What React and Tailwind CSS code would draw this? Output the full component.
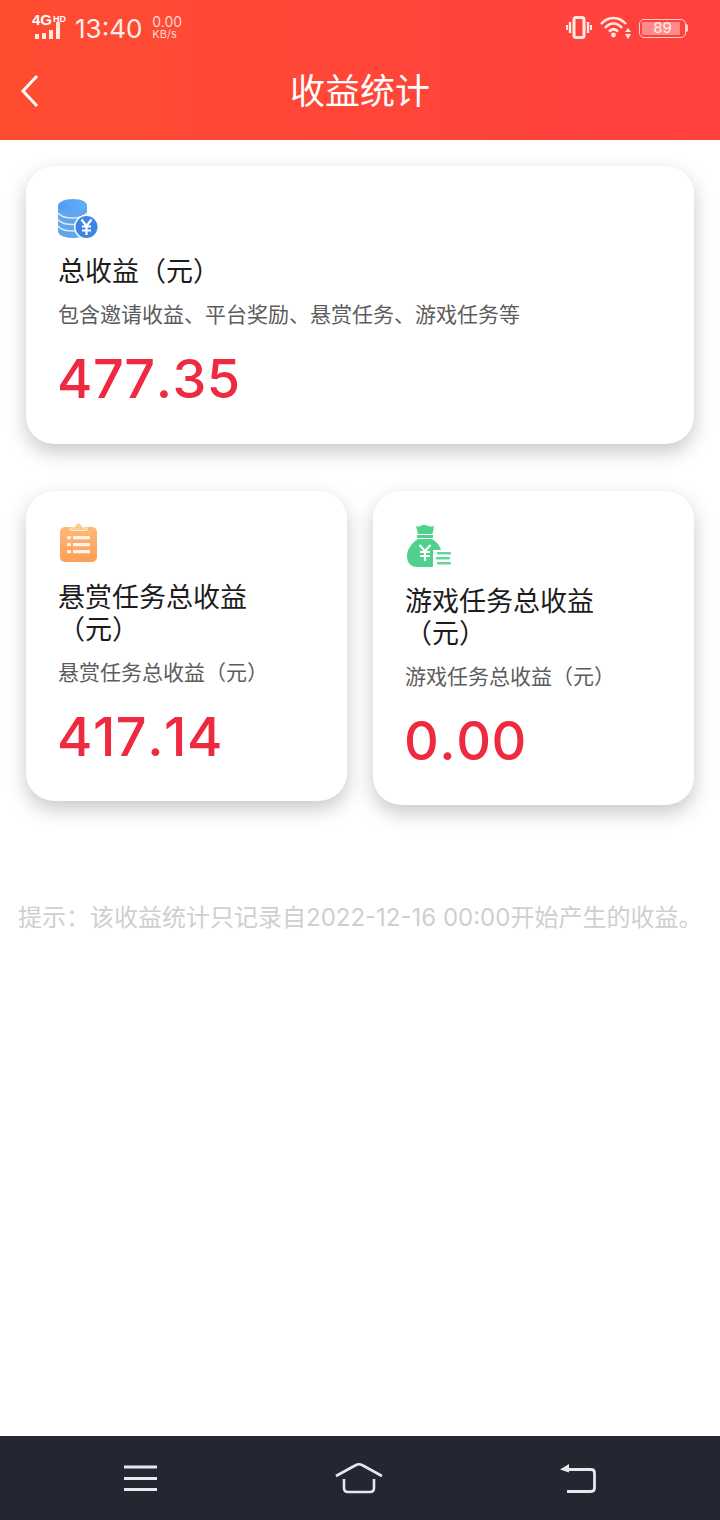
import React from 'react';

const cjk = '[font-family:Inter,"Noto_Sans_CJK_SC",sans-serif]';

const CoinsIcon = () => (
  <svg width="40" height="40" viewBox="0 0 40 40">
    <defs>
      <linearGradient id="coinTop" x1="0" y1="0" x2="1" y2="0">
        <stop offset="0" stopColor="#4f9bf2" />
        <stop offset="1" stopColor="#62aefc" />
      </linearGradient>
    </defs>
    <path d="M0 7 C0 3 6 0 15 0 C24 0 29 3 29 7 L29 32 C29 36 24 39 15 39 C6 39 0 36 0 32 Z" fill="#62a5ea" />
    <ellipse cx="14.5" cy="7" rx="14" ry="6" fill="url(#coinTop)" />
    <path d="M0 14 C3 18 9 19 15 19 C21 19 26 18 29 14 M0 20.5 C3 24.5 9 25.5 15 25.5 C21 25.5 26 24.5 29 20.5 M0 27 C3 31 9 32 15 32 C21 32 26 31 29 27" fill="none" stroke="#d8e9fb" strokeWidth="1.6" />
    <circle cx="28.5" cy="28" r="12.5" fill="#fff" />
    <circle cx="28.5" cy="28" r="11" fill="#3f85e4" />
    <path d="M23.5 20.5 L28.5 27 L33.5 20.5 M28.5 27 V36 M24 27.5 H33 M24 31.5 H33" fill="none" stroke="#fff" strokeWidth="2.2" />
  </svg>
);

const ClipboardIcon = () => (
  <svg width="38" height="40" viewBox="0 0 38 40">
    <defs>
      <linearGradient id="clip" x1="0" y1="0" x2="0" y2="1">
        <stop offset="0" stopColor="#fdb878" />
        <stop offset="1" stopColor="#fd9d58" />
      </linearGradient>
    </defs>
    <rect x="0" y="4" width="37" height="35" rx="5" fill="url(#clip)" />
    <path d="M10 5 H14 C15 2 17 0.5 18.5 0.5 C20 0.5 22 2 23 5 H27 V7.5 H10 Z" fill="#fdc98e" stroke="#fff2e2" strokeWidth="0.8" />
    <g fill="#fff4e6">
      <rect x="7" y="13" width="4" height="3.2" rx="1" />
      <rect x="7" y="20" width="4" height="3.2" rx="1" />
      <rect x="7" y="27" width="4" height="3.2" rx="1" />
      <rect x="13" y="13" width="17" height="3.2" rx="1" />
      <rect x="13" y="20" width="17" height="3.2" rx="1" />
      <rect x="13" y="27" width="17" height="3.2" rx="1" />
    </g>
  </svg>
);

const MoneyBagIcon = () => (
  <svg width="46" height="44" viewBox="0 0 46 44">
    <path d="M9 2 C13 4 14 0.5 17 1 C20 0.5 22 4 27 2 L25.5 10 H11 Z" fill="#4fd08d" />
    <path d="M10 11 H26 V14 H10 Z" fill="#4fd08d" />
    <path d="M11 15 H25 C32 19 35 26 35 32 C35 39 30 43 24 43 H10 C4 43 0 39 0 32 C0 25 5 19 11 15 Z" fill="#4fd08d" />
    <path d="M12.5 21 L18 27 L23.5 21 M18 27 V37 M13 28 H23 M13 32 H23" fill="none" stroke="#fff" strokeWidth="2.2" />
    <rect x="26" y="26" width="20" height="18" fill="#fff" />
    <g fill="#62d69a">
      <rect x="30" y="28" width="14" height="2.6" rx="1" />
      <rect x="29" y="33" width="14" height="2.6" rx="1" />
      <rect x="30" y="38" width="14" height="2.6" rx="1" />
    </g>
  </svg>
);

const StatCard = ({ icon, iconClass, title, desc, amount, className }) => (
  <div className={`bg-white rounded-[28px] shadow-[0_8px_20px_rgba(0,0,0,0.22)] pl-8 ${className}`}>
    <div className={iconClass}>{icon}</div>
    <div className="text-[27px] leading-[32px] text-[#1c1c1c] mt-[1px]">{title}</div>
    <div className="text-[21px] leading-[28px] text-[#5c5c5c] mt-[13px]">{desc}</div>
    <div className="text-[54px] leading-[64px] font-medium text-[#ee2a41] [font-kerning:none] tracking-[0.5px] mt-[18px] -ml-[1px]">{amount}</div>
  </div>
);

export default function App() {
  return (
    <div className={`w-[720px] h-[1520px] bg-white flex flex-col ${cjk}`}>
      <div className="h-[140px] shrink-0 bg-gradient-to-r from-[#ff4c30] to-[#ff403f] text-white">
        <div className="h-[56px] flex items-start justify-between pl-[32px] pr-[32px]">
          <div className="flex items-start">
            <div className="w-[34px] h-[28px] mt-[12px] relative">
              <span className="absolute left-0 top-[1px] text-[15px] leading-[14px] font-bold [font-family:'Liberation_Sans',sans-serif]">4G</span>
              <span className="absolute left-[21px] top-[3px] text-[9px] leading-[9px] font-bold [font-family:'Liberation_Sans',sans-serif]">HD</span>
              <div className="absolute left-[3px] bottom-[1px] flex items-end gap-[3px]">
                <div className="w-[4px] h-[5px] bg-[#ffe9e3]" />
                <div className="w-[4px] h-[6px] bg-[#ffe9e3]" />
                <div className="w-[4px] h-[9px] bg-[#ffe9e3]" />
                <div className="w-[4px] h-[17px] bg-[#ffe9e3]" />
              </div>
            </div>
            <div className="ml-[9px] mt-[13px] text-[26px] leading-[32px] text-[#ffeeea]">13:40</div>
            <div className="ml-[10px] mt-[15px] text-[14px] leading-[14px] text-[#ffd9d0]">
              <div>0.00</div>
              <div className="text-[11px] leading-[11px]">KB/s</div>
            </div>
          </div>
          <div className="flex items-center mt-[16px] mr-0">
            <svg width="26" height="24" viewBox="0 0 26 24" fill="none" stroke="#ffe9e3">
              <rect x="8" y="1.5" width="10" height="20" rx="2" strokeWidth="3" />
              <path d="M4 6 V17 M22 6 V17" strokeWidth="2.4" />
              <path d="M1 9 V14 M25 9 V14" strokeWidth="2" />
            </svg>
            <svg className="ml-[8px]" width="32" height="24" viewBox="0 0 32 24" fill="none" stroke="#ffe9e3" strokeWidth="2.6">
              <path d="M1 8 C8 0 19 0 26 8" />
              <path d="M5 12 C10 6 17 6 22 12" />
              <path d="M9 15.5 C12 12.5 15 12.5 18 15.5" />
              <circle cx="13.5" cy="19" r="2.4" fill="#ffe9e3" stroke="none" />
              <path d="M28 12 L25 16 H31 Z M28 23 L25 18 H31 Z" fill="#ffe9e3" stroke="none" />
            </svg>
            <div className="ml-[7px] w-[47px] h-[19px] border-[1.5px] border-[#ffd0c8] rounded-[5px] p-[2px] flex relative">
              <div className="w-[38px] h-full bg-[#ff8a8a] rounded-[1px]" />
              <span className="absolute inset-0 text-center text-[15px] leading-[16px] text-[#ffeeea]">89</span>
            </div>
            <div className="w-[2px] h-[8px] bg-[#ffd0c8] rounded-r-[2px]" />
          </div>
        </div>
        <div className="h-[70px] flex items-center relative">
          <svg className="ml-[20px]" width="20" height="34" viewBox="0 0 20 34" fill="none" stroke="#fff" strokeWidth="3">
            <path d="M17 2 L3 17 L17 32" />
          </svg>
          <div className="absolute inset-x-0 top-0 h-full flex items-center justify-center text-[35px]">收益统计</div>
        </div>
      </div>

      <div className="flex-1 px-[26px] pt-[26px]">
        <StatCard
          className="h-[278px]"
          iconClass="pt-[33px] h-[89px]"
          icon={<CoinsIcon />}
          title="总收益（元）"
          desc="包含邀请收益、平台奖励、悬赏任务、游戏任务等"
          amount="477.35"
        />
        <div className="flex items-start gap-[26px] mt-[47px]">
          <StatCard
            className="w-[321px] h-[310px]"
            iconClass="pt-[32px] h-[90px] pl-[2px]"
            icon={<ClipboardIcon />}
            title={<>悬赏任务总收益<br />（元）</>}
            desc="悬赏任务总收益（元）"
            amount="417.14"
          />
          <StatCard
            className="w-[321px] h-[314px]"
            iconClass="pt-[33px] h-[94px] pl-[2px]"
            icon={<MoneyBagIcon />}
            title={<>游戏任务总收益<br />（元）</>}
            desc="游戏任务总收益（元）"
            amount="0.00"
          />
        </div>
        <div className="-ml-[8px] mt-[97px] text-[24px] leading-[32px] text-[#cfcfcf] whitespace-nowrap">
          提示：该收益统计只记录自2022-12-16 00:00开始产生的收益。
        </div>
      </div>

      <div className="h-[84px] shrink-0 bg-[#222732] flex items-center justify-between pl-[124px] pr-[124px]">
        <svg width="33" height="26" viewBox="0 0 33 26" fill="none" stroke="#e6e8ec" strokeWidth="3">
          <path d="M0 2 H33 M0 13.5 H33 M0 24.5 H33" />
        </svg>
        <svg width="48" height="32" viewBox="0 0 48 32" fill="none" stroke="#e6e8ec" strokeWidth="2.6">
          <path d="M1 14 L21 3 Q24 1.5 27 3 L47 14" />
          <path d="M9 17 V26 Q9 30 13 30 H35 Q39 30 39 26 V17" />
        </svg>
        <svg width="36" height="30" viewBox="0 0 36 30" fill="none" stroke="#e6e8ec" strokeWidth="2.8">
          <path d="M6 6.5 H31 Q34.5 6.5 34.5 10 V25 Q34.5 28.5 31 28.5 H7" />
          <path d="M0 6.5 L9 1 V9.5 Z" fill="#e6e8ec" stroke="none" />
        </svg>
      </div>
    </div>
  );
}
